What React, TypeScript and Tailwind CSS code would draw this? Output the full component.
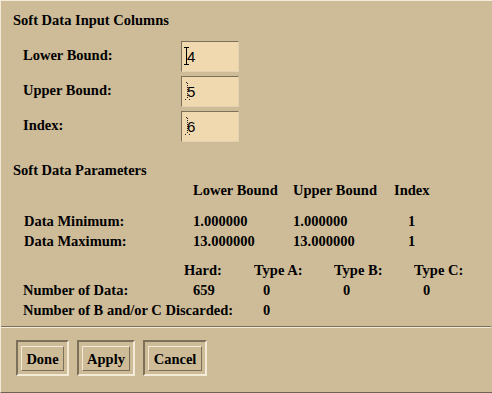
import React from 'react';

const DARK = 'border-[#7d705a]';

const Cursor = ({ dotted }: { dotted?: boolean }) => (
  <svg className="absolute left-[1px] top-[5px]" width="7" height="18" viewBox="0 0 7 18">
    {dotted ? (
      <g fill="#222">
        {[1, 3, 5, 7, 9, 11, 13, 15].map(y => (
          <rect key={y} x="4" y={y} width="1" height="1" />
        ))}
        <rect x="3" y="0" width="1" height="1" />
        <rect x="2" y="17" width="1" height="1" />
        <rect x="6" y="17" width="1" height="1" />
      </g>
    ) : (
      <g fill="#000">
        <rect x="3" y="0" width="1" height="18" />
        <rect x="1" y="0" width="5" height="1" />
        <rect x="1" y="17" width="5" height="1" />
      </g>
    )}
  </svg>
);

const Field = ({ value, active }: { value: string; active?: boolean }) => (
  <div className="relative w-[58px] h-[31px] bg-[#f0d9ae] border border-t-[#7d705a] border-l-[#7d705a] border-b-[#e2d2b2] border-r-[#e2d2b2] flex items-center pl-[5px] font-['Liberation_Sans',sans-serif] font-normal text-[15px]">
    <Cursor dotted={!active} />
    <span>{value}</span>
  </div>
);

const Button = ({ label, width }: { label: string; width: string }) => (
  <div className="border-2 border-t-[#7d705a] border-l-[#7d705a] border-b-[#f3ead7] border-r-[#f3ead7] pt-[4px] px-[3px] pb-[3px]">
    <div className={`${width} h-[25px] border border-t-[#f3ead7] border-l-[#f3ead7] border-b-[#7d705a] border-r-[#7d705a] flex items-center justify-center`}>
      {label}
    </div>
  </div>
);

export default function App() {
  const inputs = [
    { label: 'Lower Bound:', value: '4', active: true },
    { label: 'Upper Bound:', value: '5' },
    { label: 'Index:', value: '6' },
  ];

  return (
    <div className="w-[492px] h-[393px] overflow-hidden bg-[#cebc99] border-t border-l border-b border-t-[#f3ead7] border-l-[#f3ead7] border-b-[#6e6350] font-['Liberation_Serif',serif] font-bold text-[14.5px] leading-[16px] text-black flex flex-col">
      {/* Input columns */}
      <div className="mt-[11px] pl-[12px] whitespace-nowrap">Soft Data Input Columns</div>
      <div className="mt-[13px] flex flex-col gap-[4px] pl-[22px]">
        {inputs.map(row => (
          <div key={row.label} className="flex items-start h-[31px]">
            <div className="w-[158px] pt-[6px]">{row.label}</div>
            <Field value={row.value} active={row.active} />
          </div>
        ))}
      </div>

      {/* Parameters */}
      <div className="mt-[20px] pl-[12px] whitespace-nowrap">Soft Data Parameters</div>
      <div className="mt-[4px] pl-[22px] flex h-[16px] whitespace-nowrap">
        <div className="w-[170px]" />
        <div className="w-[100px]">Lower Bound</div>
        <div className="w-[100px]">Upper Bound</div>
        <div className="pl-[1px]">Index</div>
      </div>
      <div className="mt-[15px] pl-[22px] flex flex-col whitespace-nowrap">
        {[
          ['Data Minimum:', '1.000000', '1.000000', '1'],
          ['Data Maximum:', '13.000000', '13.000000', '1'],
        ].map(r => (
          <div key={r[0]} className="flex h-[20px]">
            <div className="w-[170px] pl-[1px]">{r[0]}</div>
            <div className="w-[100px]">{r[1]}</div>
            <div className="w-[100px]">{r[2]}</div>
            <div className="pl-[15px]">{r[3]}</div>
          </div>
        ))}
      </div>

      <div className="mt-[9px] pl-[22px] flex flex-col whitespace-nowrap">
        <div className="flex h-[20px]">
          <div className="w-[161px]" />
          <div className="w-[70px]">Hard:</div>
          <div className="w-[80px]">Type A:</div>
          <div className="w-[80px]">Type B:</div>
          <div>Type C:</div>
        </div>
        <div className="flex h-[20px]">
          <div className="w-[170px]">Number of Data:</div>
          <div className="w-[70px]">659</div>
          <div className="w-[80px]">0</div>
          <div className="w-[80px]">0</div>
          <div>0</div>
        </div>
        <div className="flex h-[20px]">
          <div className="w-[240px]">Number of B and/or C Discarded:</div>
          <div>0</div>
        </div>
      </div>

      {/* Separator */}
      <div className={`mt-[4px] w-[490px] h-[2px] border-t ${DARK} border-b border-b-[#f3ead7]`} />

      {/* Buttons */}
      <div className="mt-[12px] pl-[15px] flex gap-[8px]">
        <Button label="Done" width="w-[43px]" />
        <Button label="Apply" width="w-[48px]" />
        <Button label="Cancel" width="w-[54px]" />
      </div>
    </div>
  );
}
